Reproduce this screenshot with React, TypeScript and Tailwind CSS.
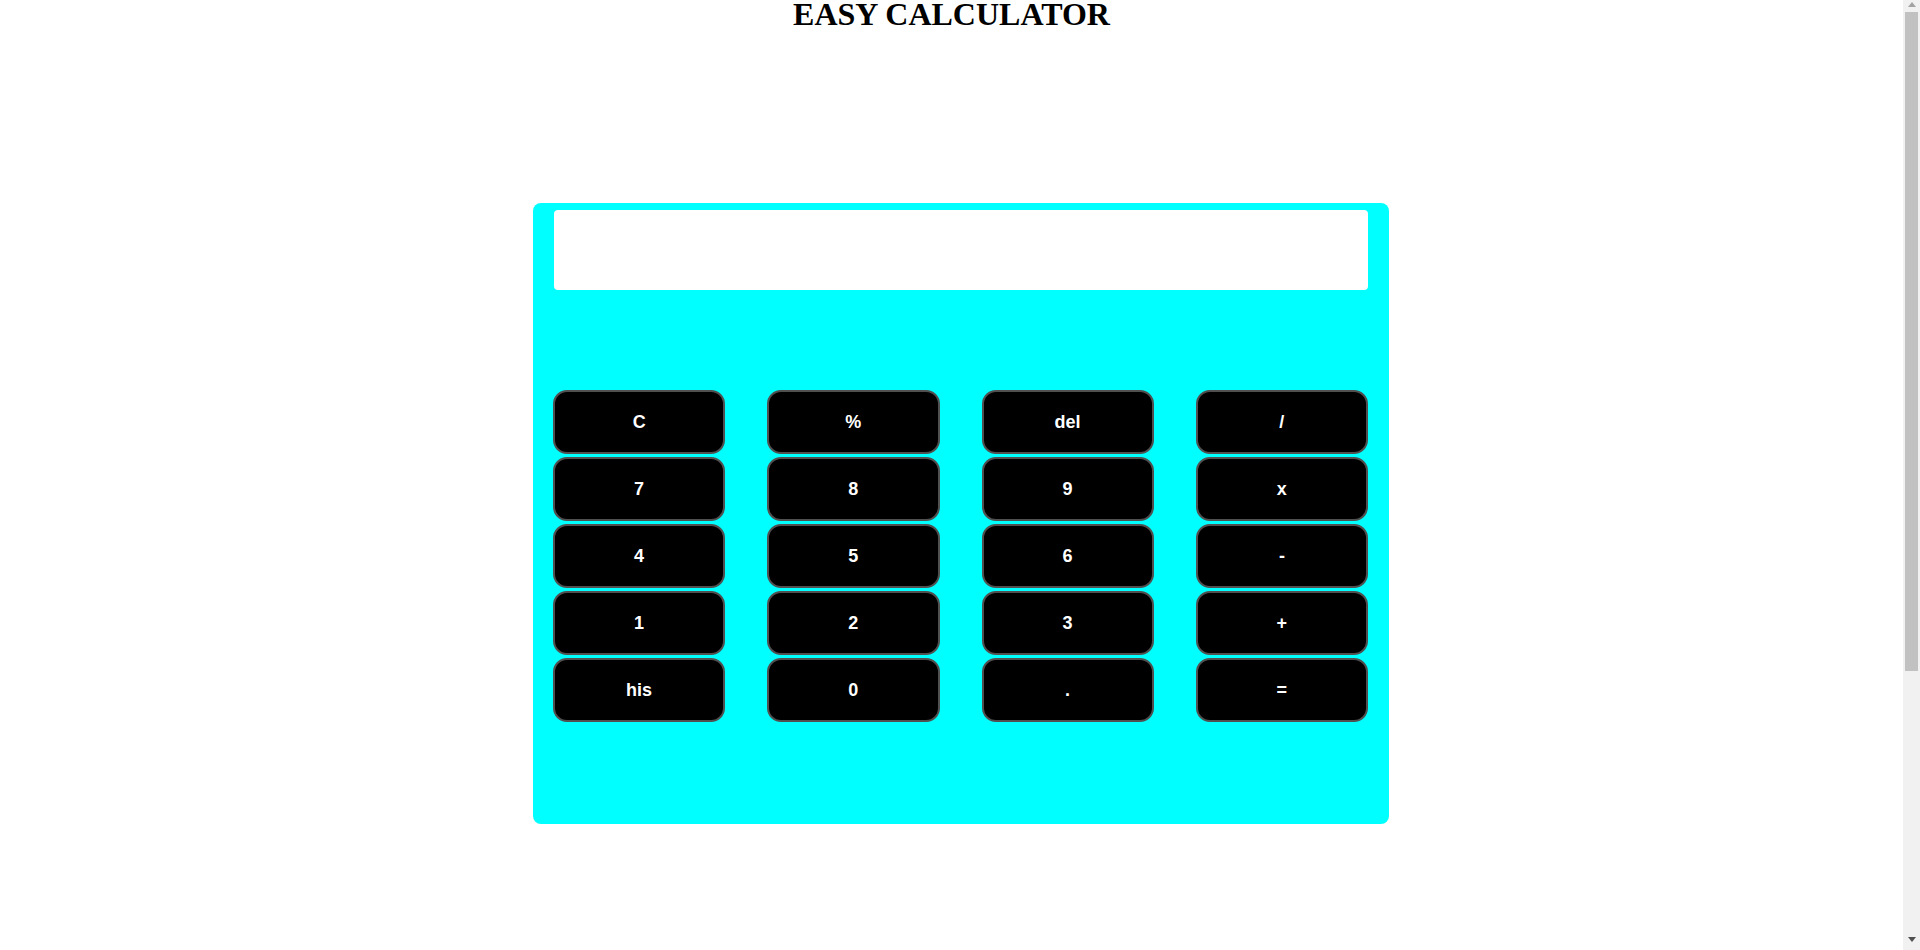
import React from "react";

const keys = [
  "C", "%", "del", "/",
  "7", "8", "9", "x",
  "4", "5", "6", "-",
  "1", "2", "3", "+",
  "his", "0", ".", "=",
];

export default function App() {
  return (
    <div className="flex h-[950px] overflow-hidden bg-white">
      <div className="w-[1903px] shrink-0">
        <h1
          className="m-0 text-center text-[32px] font-bold leading-[28px] text-black"
          style={{ fontFamily: '"Liberation Serif", "Times New Roman", serif' }}
        >
          EASY CALCULATOR
        </h1>
        <div className="ml-[533px] mt-[175px] h-[621px] w-[856px] rounded-[8px] bg-[#00ffff] px-[21px] pt-[7px]">
          <div className="h-[80px] w-full rounded-[4px] bg-white" />
          <div className="mt-[100px] grid grid-cols-4 gap-x-[43px] gap-y-[3px]">
            {keys.map((k) => (
              <button
                key={k}
                className="-ml-[1px] h-[64px] rounded-[14px] border-2 border-[#505050] bg-black text-[18px] font-bold text-white"
                style={{ fontFamily: '"Liberation Sans", Arial, sans-serif' }}
              >
                {k}
              </button>
            ))}
          </div>
        </div>
      </div>
      <div className="flex w-[17px] shrink-0 flex-col bg-[#f1f1f1]">
        <div className="flex h-[12px] items-start justify-center pt-[2px]">
          <svg width="8" height="5" viewBox="0 0 8 5">
            <polygon points="4,0 8,5 0,5" fill="#a3a3a3" />
          </svg>
        </div>
        <div className="mx-[2px] h-[659px] bg-[#c1c1c1]" />
        <div className="flex-1" />
        <div className="flex h-[14px] items-start justify-center pt-[1px]">
          <svg width="8" height="5" viewBox="0 0 8 5">
            <polygon points="0,0 8,0 4,5" fill="#505050" />
          </svg>
        </div>
      </div>
    </div>
  );
}
